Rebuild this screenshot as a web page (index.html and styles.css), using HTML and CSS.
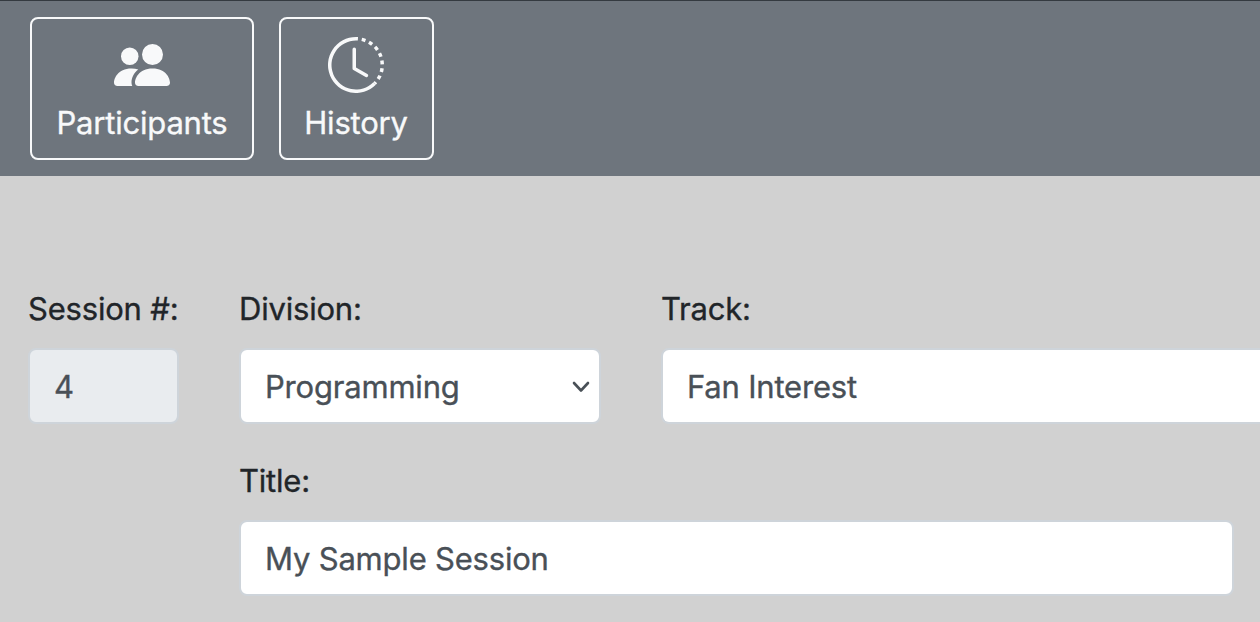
FILE: index.html
```html
<!DOCTYPE html>
<html lang="en">
<head>
<meta charset="utf-8">
<title>Edit Session</title>
<link rel="stylesheet" href="styles.css">
</head>
<body>
<nav class="toolbar">
  <button class="tool tool-participants" type="button">
    <svg class="tool-icon" viewBox="0 0 16 16" fill="currentColor" aria-hidden="true">
      <path d="M7 14s-1 0-1-1 1-4 5-4 5 3 5 4-1 1-1 1H7zm4-6a3 3 0 1 0 0-6 3 3 0 0 0 0 6z"/>
      <path d="M5.216 14A2.238 2.238 0 0 1 5 13c0-1.355.68-2.75 1.936-3.72A6.325 6.325 0 0 0 5 9c-4 0-5 3-5 4s1 1 1 1h4.216z"/>
      <path d="M4.5 8a2.5 2.5 0 1 0 0-5 2.5 2.5 0 0 0 0 5z"/>
    </svg>
    <span>Participants</span>
  </button>
  <button class="tool tool-history" type="button">
    <svg class="tool-icon" viewBox="0 0 16 16" fill="currentColor" aria-hidden="true">
      <path d="M8.515 1.019A7 7 0 0 0 8 1V0a8 8 0 0 1 .589.022l-.074.997zm2.004.45a7.003 7.003 0 0 0-.985-.299l.219-.976c.383.086.76.2 1.126.342l-.36.933zm1.37.71a7.01 7.01 0 0 0-.439-.27l.493-.87a8.025 8.025 0 0 1 .979.654l-.615.789a6.996 6.996 0 0 0-.418-.302zm1.834 1.79a6.99 6.99 0 0 0-.653-.796l.724-.69c.27.285.52.59.747.91l-.818.576zm.744 1.352a7.08 7.08 0 0 0-.214-.468l.893-.45a7.976 7.976 0 0 1 .45 1.088l-.95.313a7.023 7.023 0 0 0-.179-.483zm.53 2.507a6.991 6.991 0 0 0-.1-1.025l.985-.17c.067.386.106.778.116 1.17l-1 .025zm-.131 1.538c.033-.17.06-.339.081-.51l.993.123a7.957 7.957 0 0 1-.23 1.155l-.964-.267c.046-.165.086-.332.12-.501zm-.952 2.379c.184-.29.346-.594.486-.908l.914.405c-.16.36-.345.706-.555 1.038l-.845-.535zm-.964 1.205c.122-.122.239-.248.35-.378l.758.653a8.073 8.073 0 0 1-.401.432l-.707-.707z"/>
      <path d="M8 1a7 7 0 1 0 4.95 11.95l.707.707A8.001 8.001 0 1 1 8 0v1z"/>
      <path d="M7.5 3a.5.5 0 0 1 .5.5v5.21l3.248 1.856a.5.5 0 0 1-.496.868l-3.5-2A.5.5 0 0 1 7 9V3.5a.5.5 0 0 1 .5-.5z"/>
    </svg>
    <span>History</span>
  </button>
</nav>
<form class="session-form">
  <div class="field">
    <label for="number">Session #:</label>
    <input class="control" id="number" value="4" readonly>
  </div>
  <div class="field">
    <label for="division">Division:</label>
    <div class="select-wrap">
      <select class="control" id="division"><option>Programming</option></select>
      <svg class="chevron" viewBox="0 0 18 12" aria-hidden="true"><path d="M2 2l7 7.5L16 2"/></svg>
    </div>
  </div>
  <div class="field field-track">
    <label for="track">Track:</label>
    <select class="control" id="track"><option>Fan Interest</option></select>
  </div>
  <div class="field field-title">
    <label for="title">Title:</label>
    <input class="control" id="title" value="My Sample Session">
  </div>
</form>
</body>
</html>
```

FILE: styles.css
```css
* { box-sizing: border-box; }

body {
  margin: 0;
  height: 622px;
  overflow: hidden;
  background: #d1d1d1;
  color: #212529;
  font: 31px/48px Inter, "Liberation Sans", sans-serif;
  letter-spacing: -0.2px;
  -webkit-text-stroke: 0.35px currentColor;
}

.toolbar {
  display: flex;
  align-items: flex-start;
  gap: 25px;
  height: 176px;
  padding: 16px 30px 0;
  border-top: 1px solid #343a40;
  background: #6e757d;
}

.tool {
  display: flex;
  flex-direction: column;
  align-items: center;
  height: 143px;
  padding: 18px 0 0;
  border: 2px solid #f8f9fa;
  border-radius: 8px;
  background: none;
  color: #f8f9fa;
  font: inherit;
  letter-spacing: inherit;
  white-space: nowrap;
}

.tool-participants { width: 224px; }

.tool-history {
  width: 155px;
  padding-right: 1px;
}

.tool-icon {
  display: block;
  width: 56px;
  height: 56px;
  margin-bottom: 6px;
}

.session-form {
  display: grid;
  grid-template-columns: 151px 362px 1fr;
  column-gap: 60px;
  row-gap: 33px;
  padding: 109px 0 0 28px;
}

.field {
  display: flex;
  flex-direction: column;
  gap: 15px;
  min-width: 0;
}

.field-title {
  grid-column: 2 / 4;
  width: 995px;
}

label {
  display: block;
  white-space: nowrap;
}

.control {
  appearance: none;
  display: block;
  width: 100%;
  height: 76px;
  margin: 0;
  padding: 0 24px;
  border: 2px solid #ced4da;
  border-radius: 8px;
  background: #fff;
  color: #495057;
  font: inherit;
  letter-spacing: inherit;
}

select.control { padding-top: 1px; }

.control:read-only:not(select) { background: #e9ecef; }

.field-track .control {
  border-right: 0;
  border-radius: 8px 0 0 8px;
}

.select-wrap { position: relative; }

.chevron {
  position: absolute;
  right: 11px;
  top: 33px;
  width: 18px;
  height: 12px;
  fill: none;
  stroke: #495057;
  stroke-width: 2.6;
  stroke-linecap: round;
  stroke-linejoin: round;
}
```
